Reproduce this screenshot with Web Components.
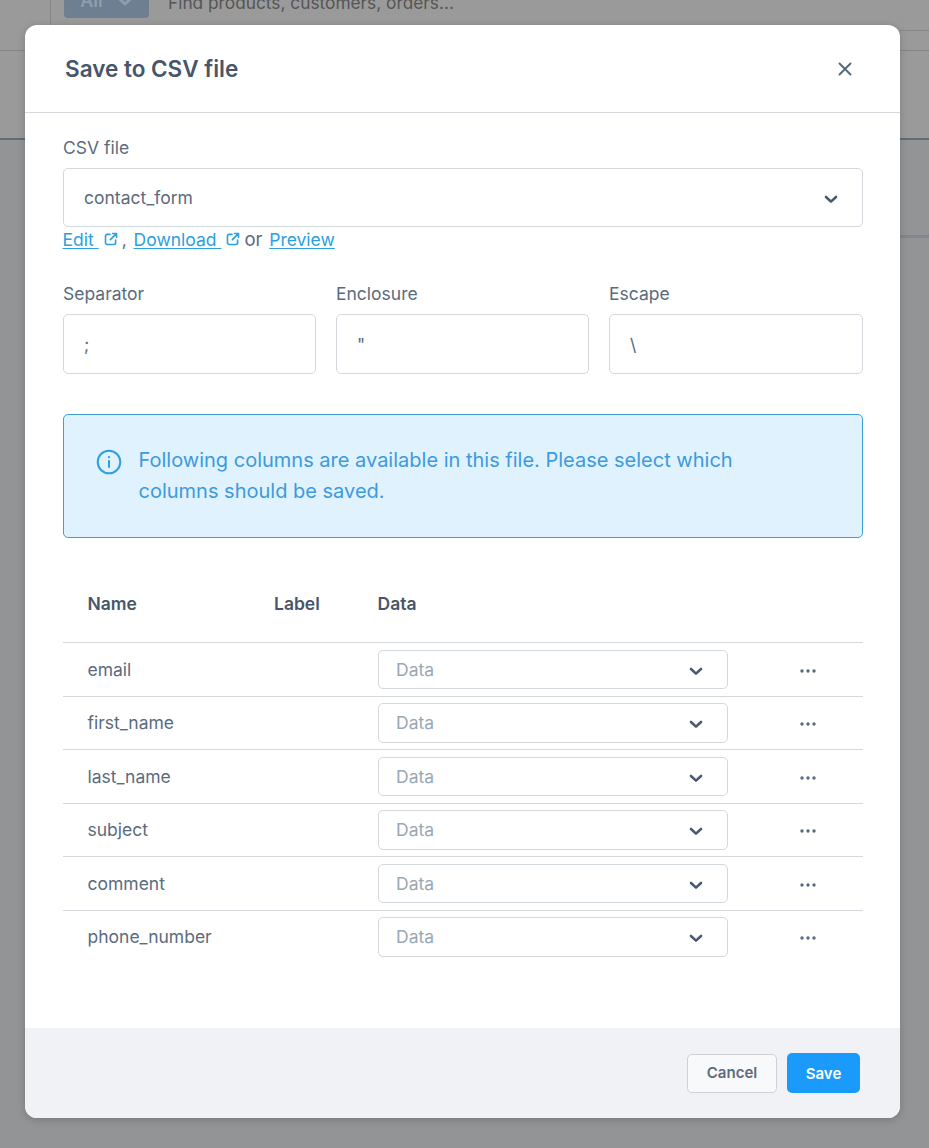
<!DOCTYPE html>
<html>
<head>
<meta charset="utf-8">
<style>
  html, body { margin: 0; height: 100%; }
  body { font-family: Inter, "Liberation Sans", sans-serif; color: #5a6b7e; overflow: hidden; background: #939495; }
</style>
</head>
<body>
<page-backdrop></page-backdrop>
<save-modal heading="Save to CSV file">
  <form-field label="CSV file">
    <select-box value="contact_form" size="large"></select-box>
  </form-field>
  <file-links></file-links>
  <separator-row></separator-row>
  <info-alert>Following columns are available in this file. Please select which columns should be saved.</info-alert>
  <columns-table columns="email,first_name,last_name,subject,comment,phone_number"></columns-table>
</save-modal>

<script>
const CHEVRON = `<svg width="14" height="9" viewBox="0 0 14 9" fill="none"><path d="M2 2 7 6.6 12 2" stroke="#4a5a6c" stroke-width="2.6" stroke-linecap="round" stroke-linejoin="round"/></svg>`;
const EXTERNAL = `<svg width="14" height="14" viewBox="0 0 14 14" fill="none" stroke="#2b9fe0" stroke-width="1.6" stroke-linecap="round" stroke-linejoin="round"><path d="M6 2.4H3.2A1.7 1.7 0 0 0 1.5 4.1v6.7a1.7 1.7 0 0 0 1.7 1.7h6.7a1.7 1.7 0 0 0 1.7-1.7V8"/><path d="M8.6 1.5h3.9v3.9M12.4 1.6 6.4 7.6"/></svg>`;

class PageBackdrop extends HTMLElement {
  connectedCallback() {
    this.attachShadow({ mode: "open" });
    this.shadowRoot.innerHTML = `
      <style>
        :host { position: absolute; inset: 0; display: block; overflow: hidden; background: #939495; font-family: Inter, "Liberation Sans", sans-serif; }
        .topbar { height: 50px; background: #9a9a9a; border-bottom: 1px solid #868686; display: flex; position: relative; overflow: hidden; }
        .brand { width: 50px; border-right: 1px solid #868686; }
        .search { display: flex; align-items: flex-start; gap: 19px; padding-left: 13px; margin-top: -6px; }
        .all { width: 85px; height: 24px; background: #6d7f91; border-radius: 4px; color: #8f9eac; font-size: 18px; font-weight: 600; display: flex; justify-content: center; align-items: flex-start; gap: 14px; flex: none; line-height: 14px; }
        .all svg { margin-top: 3px; }
        .hint { color: #555; font-size: 17.3px; line-height: 20px; white-space: nowrap; margin-top: -1px; }
        .subbar { height: 87px; background: #9a9a9a; border-bottom: 2px solid #626c75; }
        .panel { height: 98px; display: flex; justify-content: flex-end; align-items: flex-end; }
        .rightline { position: absolute; right: 0; top: 30px; width: 29px; height: 1px; background: #868686; }
        .panelline { width: 29px; height: 3px; background: #80878e; }
      </style>
      <div class="topbar">
        <div class="brand"></div>
        <div class="search"><span class="all">All <svg width="16" height="9" viewBox="0 0 16 9" fill="none"><path d="M2 1.5 8 7l6-5.5" stroke="#8f9eac" stroke-width="3" stroke-linecap="round" stroke-linejoin="round"/></svg></span><span class="hint">Find products, customers, orders...</span></div>
        <div class="rightline"></div>
      </div>
      <div class="subbar"></div>
      <div class="panel"><div class="panelline"></div></div>`;
  }
}

class SaveModal extends HTMLElement {
  connectedCallback() {
    this.attachShadow({ mode: "open" });
    this.shadowRoot.innerHTML = `
      <style>
        :host { position: absolute; left: 25px; top: 25px; width: 875px; height: 1093px; display: flex; flex-direction: column; background: #fff; border-radius: 12px; overflow: hidden; box-shadow: 0 2px 8px rgba(0,0,0,.18); font-family: Inter, "Liberation Sans", sans-serif; }
        header { height: 87px; flex: none; box-sizing: content-box; border-bottom: 1px solid #d5d9dd; display: flex; align-items: center; justify-content: space-between; padding: 0 48px 0 40px; }
        h2 { margin: 0; font-size: 22.5px; font-weight: 600; color: #47566a; }
        .close { display: flex; }
        main { flex: 1; padding: 24px 37px 0 38px; min-height: 0; }
        footer { height: 90px; flex: none; background: #f0f2f5; display: flex; justify-content: flex-end; align-items: flex-start; gap: 10px; padding: 25px 40px 0 0; box-sizing: border-box; }
        button { font: 600 15px Inter, "Liberation Sans", sans-serif; border-radius: 5px; cursor: pointer; box-sizing: border-box; }
        .cancel { width: 90px; height: 39px; margin-top: 1px; padding: 0 0 2px; background: #f8f9fb; border: 1px solid #ccd1d7; color: #5c6b7c; }
        .save { width: 73px; height: 40px; background: #1a9bfc; border: 0; color: #fff; }
      </style>
      <header>
        <h2>${this.getAttribute("heading")}</h2>
        <span class="close"><svg width="14" height="14" viewBox="0 0 14 14" fill="none" stroke="#54677b" stroke-width="1.9" stroke-linecap="round"><path d="M1.5 1.5l11 11M12.5 1.5l-11 11"/></svg></span>
      </header>
      <main><slot></slot></main>
      <footer><button class="cancel">Cancel</button><button class="save">Save</button></footer>`;
  }
}

class FormField extends HTMLElement {
  connectedCallback() {
    this.attachShadow({ mode: "open" });
    this.shadowRoot.innerHTML = `
      <style>
        :host { display: block; }
        label { display: block; height: 21px; line-height: 21px; font-size: 17.5px; color: #5a6b7e; margin-bottom: 10px; white-space: nowrap; }
      </style>
      <label>${this.getAttribute("label")}</label>
      <slot></slot>`;
  }
}

class SelectBox extends HTMLElement {
  connectedCallback() {
    this.attachShadow({ mode: "open" });
    const large = this.getAttribute("size") === "large";
    this.shadowRoot.innerHTML = `
      <style>
        :host { display: flex; align-items: center; justify-content: space-between; box-sizing: border-box; background: #fff; border: 1px solid #d3d8dd; border-radius: 5px; height: ${large ? 59 : 39.5}px; padding: 0 24px 0 ${large ? 20 : 17}px; font-size: 17.5px; color: ${this.hasAttribute("placeholder") ? "#9aa7b4" : "#5a6b7e"}; }
        svg { display: block; margin-top: 4px; }
      </style>
      <span>${this.getAttribute("value")}</span>${CHEVRON}`;
  }
}

class FileLinks extends HTMLElement {
  connectedCallback() {
    this.attachShadow({ mode: "open" });
    this.shadowRoot.innerHTML = `
      <style>
        :host { display: flex; align-items: center; height: 24px; margin-left: -0.5px; font-size: 17.5px; color: #5a6b7e; white-space: pre; }
        a { color: #2b9fe0; text-decoration: underline; text-underline-offset: 2px; }
        svg { margin: 0 4px 0 5px; display: block; }
        .comma { margin-right: 2px; }
        .or { font-size: 18.5px; margin-right: 1.5px; }
      </style>
      <a href="#">Edit </a>${EXTERNAL}<span class="comma">, </span><a href="#">Download </a>${EXTERNAL}<span class="or">or </span><a href="#">Preview</a>`;
  }
}

class SeparatorRow extends HTMLElement {
  connectedCallback() {
    this.attachShadow({ mode: "open" });
    const field = (label, value) => `
      <form-field label="${label}"><div class="input">${value}</div></form-field>`;
    this.shadowRoot.innerHTML = `
      <style>
        :host { display: grid; grid-template-columns: 253px 253px 254px; gap: 20px; margin-top: 32px; }
        .input { box-sizing: border-box; height: 60px; border: 1px solid #d3d8dd; border-radius: 5px; padding: 0 20px; display: flex; align-items: center; font-size: 17.5px; color: #5a6b7e; }
      </style>
      ${field("Separator", ";")}${field("Enclosure", "&quot;")}${field("Escape", "\\")}`;
  }
}

class InfoAlert extends HTMLElement {
  connectedCallback() {
    this.attachShadow({ mode: "open" });
    this.shadowRoot.innerHTML = `
      <style>
        :host { display: flex; gap: 16.5px; box-sizing: border-box; height: 124px; margin-top: 40px; padding: 30px 60px 0 32px; background: #e0f2fe; border: 1px solid #3b9fd1; border-radius: 5px; color: #3c9ade; font-size: 20px; line-height: 31px; }
        svg { flex: none; margin-top: 4px; }
      </style>
      <svg width="26" height="26" viewBox="0 0 26 26" fill="none" stroke="#2b9fe0"><circle cx="13" cy="13" r="11.3" stroke-width="2"/><path d="M13 12v6" stroke-width="2" stroke-linecap="round"/><circle cx="13" cy="8.2" r="1.1" fill="#2b9fe0" stroke="none"/></svg>
      <div><slot></slot></div>`;
  }
}

class ColumnsTable extends HTMLElement {
  connectedCallback() {
    this.attachShadow({ mode: "open" });
    const rows = this.getAttribute("columns").split(",").map(name => `
      <div class="row">
        <span class="name">${name}</span>
        <select-box value="Data" placeholder></select-box>
        <svg class="more" width="18" height="4" viewBox="0 0 18 4" fill="#5a6b7e"><circle cx="3" cy="2" r="1.7"/><circle cx="9" cy="2" r="1.7"/><circle cx="15" cy="2" r="1.7"/></svg>
      </div>`).join("");
    this.shadowRoot.innerHTML = `
      <style>
        :host { display: block; margin-top: 36px; font-size: 17.5px; }
        .head { display: grid; grid-template-columns: 186.5px 103.5px auto; height: 68px; box-sizing: border-box; padding: 0 0 10px 24.5px; align-items: center; font-weight: 600; color: #47566a; }
        .row { display: grid; grid-template-columns: 290.5px 350px auto; height: 53.5px; box-sizing: border-box; border-top: 1px solid #d5d9dd; padding-left: 24.5px; align-items: center; color: #5a6b7e; }
        .more { margin-left: 71px; margin-top: 3px; }
      </style>
      <div class="head"><span>Name</span><span>Label</span><span>Data</span></div>
      ${rows}`;
  }
}

customElements.define("page-backdrop", PageBackdrop);
customElements.define("save-modal", SaveModal);
customElements.define("form-field", FormField);
customElements.define("select-box", SelectBox);
customElements.define("file-links", FileLinks);
customElements.define("separator-row", SeparatorRow);
customElements.define("info-alert", InfoAlert);
customElements.define("columns-table", ColumnsTable);
</script>
</body>
</html>
